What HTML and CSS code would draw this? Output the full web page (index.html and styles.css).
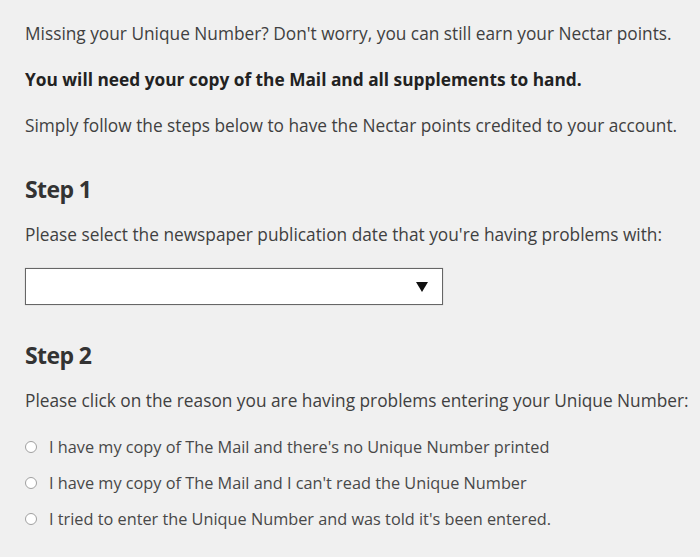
FILE: index.html
```html
<!DOCTYPE html>
<html lang="en">
<head>
  <meta charset="UTF-8">
  <title>Missing Unique Number</title>
  <link rel="stylesheet" href="styles.css">
</head>
<body>
  <div class="page">
    <p>Missing your Unique Number? Don't worry, you can still earn your Nectar points.</p>
    <p><strong>You will need your copy of the Mail and all supplements to hand.</strong></p>
    <p>Simply follow the steps below to have the Nectar points credited to your account.</p>

    <h2>Step 1</h2>
    <p class="lead">Please select the newspaper publication date that you're having problems with:</p>
    <div class="select-box">
      <svg class="arrow" width="12" height="10" viewBox="0 0 12 10"><path d="M0 0H12L6 10Z" fill="#111"/></svg>
    </div>

    <h2 class="step-2">Step 2</h2>
    <p>Please click on the reason you are having problems entering your Unique Number:</p>
    <ul class="reasons">
      <li><span class="radio"></span>I have my copy of The Mail and there's no Unique Number printed</li>
      <li><span class="radio"></span>I have my copy of The Mail and I can't read the Unique Number</li>
      <li><span class="radio"></span>I tried to enter the Unique Number and was told it's been entered.</li>
    </ul>
  </div>
</body>
</html>
```

FILE: styles.css
```css
body {
  margin: 0;
  background: #f0f0f0;
  font-family: 'Open Sans', sans-serif;
  color: #404040;
}
.page {
  padding: 23px 0 0 25px;
}
p {
  margin: 0 0 24px;
  font-size: 17.3px;
  line-height: 22px;
  white-space: nowrap;
}
p.lead {
  margin-bottom: 22px;
}
strong {
  color: #222;
}
h2 {
  margin: 37px 0 20px;
  font-size: 23px;
  line-height: 30px;
  font-weight: 700;
  color: #333;
  letter-spacing: -0.6px;
}
h2.step-2 {
  margin-top: 35px;
}
.select-box {
  width: 402px;
  height: 35px;
  border: 1px solid #666;
  box-shadow: 0 0 1px rgba(0, 0, 0, 0.25);
  background: #fff;
  display: flex;
  align-items: center;
  justify-content: flex-end;
  padding-right: 14px;
}
.reasons {
  list-style: none;
  margin: 0;
  padding: 0;
}
.reasons li {
  display: flex;
  align-items: center;
  font-size: 16.3px;
  line-height: 22px;
  margin-bottom: 14px;
  white-space: nowrap;
  color: #484848;
}
.radio {
  flex: none;
  width: 10px;
  height: 10px;
  border: 1.5px solid #a0a0a0;
  border-radius: 50%;
  background: #fff;
  margin-right: 12px;
}
```
